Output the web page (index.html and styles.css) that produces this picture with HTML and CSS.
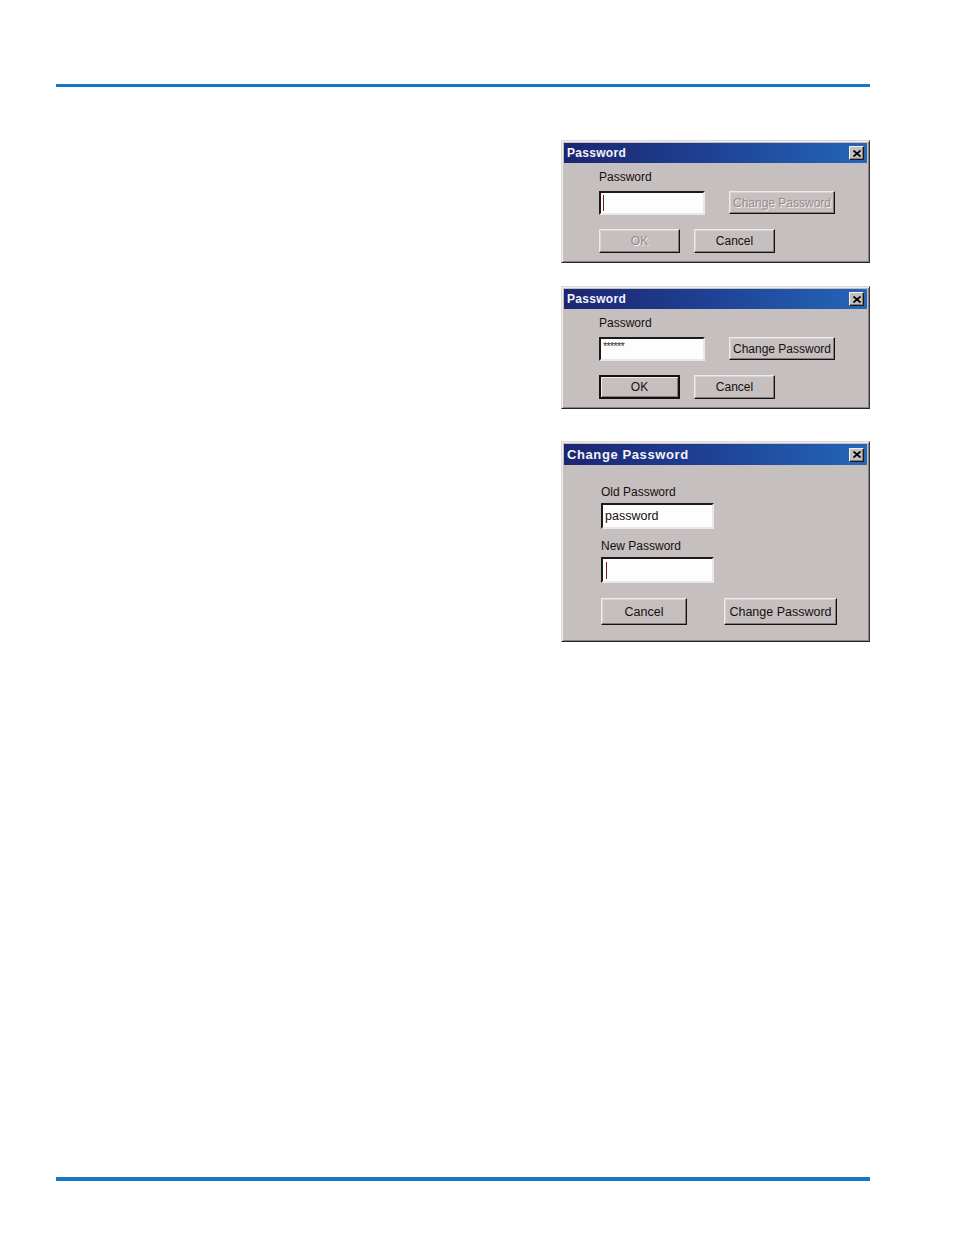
FILE: index.html
```html
<!DOCTYPE html>
<html>
<head>
<meta charset="utf-8">
<link rel="stylesheet" href="styles.css">
</head>
<body>
<div class="page">
  <div class="rule"></div>
  <div class="dialogs">
    <div class="win w1">
      <div class="titlebar"><span class="title">Password</span><span class="close"><svg width="8" height="7" viewBox="0 0 8 7"><path d="M0.5 0.5 L7.5 6.5 M7.5 0.5 L0.5 6.5" stroke="#000" stroke-width="1.8"/></svg></span></div>
      <div class="body pw">
        <div class="label">Password</div>
        <div class="row r1">
          <div class="field"><span class="caret"></span></div>
          <div class="btn disabled wide">Change Password</div>
        </div>
        <div class="row r2">
          <div class="btn disabled small">OK</div>
          <div class="btn small">Cancel</div>
        </div>
      </div>
    </div>

    <div class="win w2">
      <div class="titlebar"><span class="title">Password</span><span class="close"><svg width="8" height="7" viewBox="0 0 8 7"><path d="M0.5 0.5 L7.5 6.5 M7.5 0.5 L0.5 6.5" stroke="#000" stroke-width="1.8"/></svg></span></div>
      <div class="body pw">
        <div class="label">Password</div>
        <div class="row r1">
          <div class="field"><span class="stars">******</span></div>
          <div class="btn wide">Change Password</div>
        </div>
        <div class="row r2">
          <div class="btn small default">OK</div>
          <div class="btn small">Cancel</div>
        </div>
      </div>
    </div>

    <div class="win w3">
      <div class="titlebar tall"><span class="title big">Change Password</span><span class="close"><svg width="8" height="7" viewBox="0 0 8 7"><path d="M0.5 0.5 L7.5 6.5 M7.5 0.5 L0.5 6.5" stroke="#000" stroke-width="1.8"/></svg></span></div>
      <div class="body cp">
        <div class="label l-old">Old Password</div>
        <div class="field f3"><span class="val">password</span></div>
        <div class="label l-new">New Password</div>
        <div class="field f3"><span class="caret c3"></span></div>
        <div class="row r3">
          <div class="btn cancel3">Cancel</div>
          <div class="btn change3">Change Password</div>
        </div>
      </div>
    </div>
  </div>
  <div class="rule bottom"></div>
</div>
</body>
</html>
```

FILE: styles.css
```css
html, body {
  margin: 0;
  padding: 0;
  background: #ffffff;
}

.page {
  width: 954px;
  height: 1235px;
  display: flex;
  flex-direction: column;
  box-sizing: border-box;
  padding-left: 56px;
  font-family: "Liberation Sans", Arial, sans-serif;
}

.rule {
  width: 814px;
  height: 3px;
  background: #1878c8;
  margin-top: 84px;
}

.rule.bottom {
  margin-top: auto;
  margin-bottom: 54px;
  height: 4px;
}

.dialogs {
  width: 814px;
  display: flex;
  flex-direction: column;
  align-items: flex-end;
  margin-top: 53px;
}

.win {
  width: 309px;
  box-sizing: border-box;
  background: #c6bfbf;
  border: 1px solid;
  border-color: #dcd6d6 #3a3434 #2a2424 #dcd6d6;
  padding: 2px;
  box-shadow: inset 1px 1px 0 #f2eeee, inset -1px -1px 0 #8a8282;
}

.w2 { margin-top: 23px; }
.w3 { margin-top: 32px; }

.titlebar {
  height: 20px;
  background: linear-gradient(90deg, #1c2670 0%, #1e3f92 45%, #2466b8 100%);
  display: flex;
  align-items: center;
  justify-content: space-between;
  padding: 0 3px 0 3px;
}

.titlebar.tall { height: 21px; }

.title {
  color: #f4f4fb;
  font-weight: bold;
  font-size: 12px;
  letter-spacing: 0.3px;
}

.title.big {
  font-size: 13px;
  letter-spacing: 0.6px;
}

.close {
  width: 15px;
  height: 14px;
  box-sizing: border-box;
  background: #c6bfbf;
  border: 1px solid;
  border-color: #f4f0f0 #1e1a1a #1e1a1a #f4f0f0;
  box-shadow: inset -1px -1px 0 #847c7c;
  display: flex;
  align-items: center;
  justify-content: center;
}

.close svg { display: block; }

.body.pw {
  padding: 7px 0 7px 35px;
}

.label {
  font-size: 12px;
  line-height: 14px;
  color: #141010;
}

.row {
  display: flex;
  align-items: flex-start;
}

.r1 {
  margin-top: 7px;
  gap: 24px;
}

.r2 {
  margin-top: 14px;
  gap: 14px;
}

.field {
  width: 106px;
  height: 24px;
  box-sizing: border-box;
  background: #fdfdfd;
  border: 2px solid;
  border-color: #1e1a1a #ece8e8 #ece8e8 #1e1a1a;
  display: flex;
  align-items: center;
  padding-left: 2px;
}

.caret {
  width: 1px;
  height: 16px;
  background: #701818;
}

.stars {
  font-size: 11px;
  line-height: 10px;
  color: #3a3030;
  align-self: flex-start;
  margin-top: 2px;
  letter-spacing: -0.8px;
}

.btn {
  box-sizing: border-box;
  height: 24px;
  border: 1px solid;
  border-color: #f0eaea #141010 #141010 #f0eaea;
  box-shadow: inset -1px -1px 0 #847c7c, inset 1px 1px 0 #d8d2d2;
  background: #c6bfbf;
  display: flex;
  align-items: center;
  justify-content: center;
  font-size: 12px;
  color: #141010;
  white-space: nowrap;
}

.btn.wide {
  width: 106px;
  height: 23px;
}

.btn.small {
  width: 81px;
}

.btn.disabled {
  color: #948c8c;
  text-shadow: 1px 1px 0 #f2eeee;
}

.btn.default {
  border: 2px solid #141010;
  box-shadow: inset 1px 1px 0 #f0eaea, inset -1px -1px 0 #847c7c;
}

.body.cp {
  padding: 20px 0 14px 37px;
}

.field.f3 {
  width: 113px;
  height: 26px;
  margin-top: 4px;
}

.val {
  font-size: 12.5px;
  color: #141010;
}

.l-new { margin-top: 10px; }

.caret.c3 { height: 17px; margin-left: 1px; }

.r3 {
  margin-top: 15px;
  gap: 37px;
}

.btn.cancel3 {
  width: 86px;
  height: 27px;
  font-size: 12.5px;
}

.btn.change3 {
  width: 113px;
  height: 27px;
  font-size: 12.5px;
}
```
